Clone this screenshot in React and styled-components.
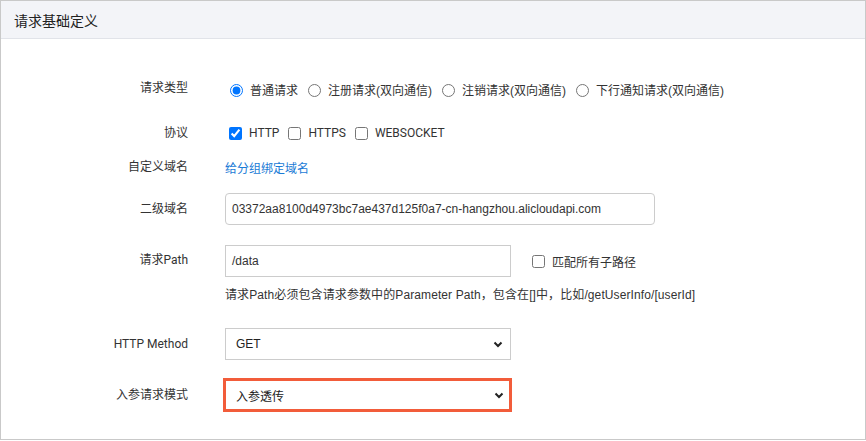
import React from 'react';
import styled, { createGlobalStyle } from 'styled-components';

const GlobalStyle = createGlobalStyle`
  html, body {
    margin: 0;
    padding: 0;
    background: #fff;
  }
  body {
    font-family: "Liberation Sans", "Noto Sans CJK SC", Arial, sans-serif;
    color: #333;
  }
`;

const Frame = styled.div`
  width: 866px;
  height: 440px;
  box-sizing: border-box;
  border: 1px solid #c9c9c9;
  background: #fff;
`;

const Header = styled.div`
  height: 38px;
  box-sizing: border-box;
  background: #f3f4f8;
  border-bottom: 1px solid #e1e3e9;
  display: flex;
  align-items: center;
  padding-left: 13px;
  font-size: 14px;
  color: #222;
`;

const Row = styled.div`
  display: grid;
  grid-template-columns: 187px 1fr;
  column-gap: 37px;
  align-items: center;
  height: ${p => p.$h}px;
  margin-top: ${p => p.$top}px;
`;

const Label = styled.div`
  text-align: right;
  font-family: Roboto, "Noto Sans CJK SC", sans-serif;
  font-size: 12px;
  color: #333;
  line-height: 16px;
  margin-top: ${p => p.$shift || 0}px;
`;

const Controls = styled.div`
  display: flex;
  align-items: center;
  font-size: 12px;
  color: #333;
  font-family: ${p => (p.$narrow ? 'Roboto, "Noto Sans CJK SC", sans-serif' : 'inherit')};
`;

const Option = styled.label`
  display: inline-flex;
  align-items: center;
  margin-right: ${p => p.$gap}px;
  white-space: nowrap;
`;

const Radio = styled.input.attrs({ type: 'radio' })`
  width: 13px;
  height: 13px;
  margin: 2px 7px 0 ${p => p.$ml || 0}px;
  accent-color: #0075ff;
`;

const Check = styled.input.attrs({ type: 'checkbox' })`
  width: 13px;
  height: 13px;
  margin: 0 7px 0 ${p => p.$ml || 0}px;
  accent-color: #0075ff;
`;

const Link = styled.a`
  color: #1a7bd6;
  font-size: 12px;
  text-decoration: none;
`;

const TextBox = styled.div`
  box-sizing: border-box;
  width: ${p => p.$w}px;
  height: 32px;
  border: 1px solid #cccccc;
  border-radius: ${p => p.$r || 0}px;
  display: flex;
  align-items: center;
  padding-left: 6px;
  font-size: 12px;
  color: #333;
`;

const SelectBox = styled.div`
  box-sizing: border-box;
  width: ${p => (p.$hl ? 289 : 286)}px;
  height: ${p => (p.$hl ? 34 : 32)}px;
  margin-left: ${p => (p.$hl ? -2 : 0)}px;
  border: ${p => (p.$hl ? '3px solid #f25c3a' : '1px solid #cccccc')};
  display: flex;
  align-items: center;
  justify-content: space-between;
  padding: 0 ${p => (p.$hl ? 5 : 7)}px 0 10px;
  font-size: 12px;
  color: #222;
`;

const Help = styled.div`
  margin: 9px 0 0 224px;
  font-size: 12px;
  line-height: 18px;
  letter-spacing: 0.1px;
  color: #333;
`;

const Chevron = () => (
  <svg width="10" height="7" viewBox="0 0 10 7">
    <path d="M1.5 1.5 L5 5 L8.5 1.5" fill="none" stroke="#222" strokeWidth="2" />
  </svg>
);

export default function App() {
  return (
    <>
      <GlobalStyle />
      <Frame>
        <Header>请求基础定义</Header>

        <Row $top={40} $h={20}>
          <Label $shift={-3}>请求类型</Label>
          <Controls>
            <Option $gap={10}>
              <Radio name="type" defaultChecked $ml={5} />普通请求
            </Option>
            <Option $gap={10}>
              <Radio name="type" />注册请求(双向通信)
            </Option>
            <Option $gap={10}>
              <Radio name="type" />注销请求(双向通信)
            </Option>
            <Option $gap={0}>
              <Radio name="type" />下行通知请求(双向通信)
            </Option>
          </Controls>
        </Row>

        <Row $top={24} $h={20}>
          <Label>协议</Label>
          <Controls $narrow>
            <Option $gap={9}>
              <Check defaultChecked $ml={4} />HTTP
            </Option>
            <Option $gap={9}>
              <Check />HTTPS
            </Option>
            <Option $gap={0}>
              <Check />WEBSOCKET
            </Option>
          </Controls>
        </Row>

        <Row $top={14} $h={20}>
          <Label>自定义域名</Label>
          <Controls>
            <Link href="#">给分组绑定域名</Link>
          </Controls>
        </Row>

        <Row $top={16} $h={32}>
          <Label>二级域名</Label>
          <Controls>
            <TextBox $w={430} $r={4}>03372aa8100d4973bc7ae437d125f0a7-cn-hangzhou.alicloudapi.com</TextBox>
          </Controls>
        </Row>

        <Row $top={20} $h={32}>
          <Label $shift={-2}>请求Path</Label>
          <Controls>
            <TextBox $w={286}>/data</TextBox>
            <Option $gap={0}>
              <Check $ml={21} />匹配所有子路径
            </Option>
          </Controls>
        </Row>

        <Help>请求Path必须包含请求参数中的Parameter Path，包含在[]中，比如/getUserInfo/[userId]</Help>

        <Row $top={24} $h={32}>
          <Label>HTTP Method</Label>
          <Controls>
            <SelectBox>
              <span>GET</span>
              <Chevron />
            </SelectBox>
          </Controls>
        </Row>

        <Row $top={18} $h={34}>
          <Label>入参请求模式</Label>
          <Controls>
            <SelectBox $hl>
              <span>入参透传</span>
              <Chevron />
            </SelectBox>
          </Controls>
        </Row>
      </Frame>
    </>
  );
}
